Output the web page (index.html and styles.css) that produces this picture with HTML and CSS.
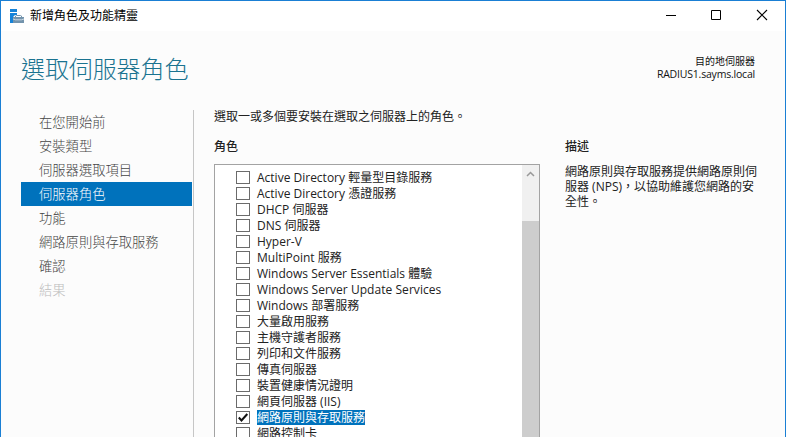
FILE: index.html
```html
<!DOCTYPE html>
<html lang="zh-Hant">
<head>
<meta charset="utf-8">
<title>新增角色及功能精靈</title>
<link rel="stylesheet" href="styles.css">
</head>
<body>
<div class="window">
  <header class="titlebar">
    <svg class="app-icon" width="15" height="15" viewBox="0 0 15 15">
      <path fill="#1683d8" d="M0 0h7v3H0zM0 4h7v2H5L3 8v6H0z"/>
      <path fill="#7494ad" d="M3 8h11v6H3z"/>
      <path fill="none" stroke="#7494ad" d="M5.500 8V7L6.500 6.500h4L11.500 7v1"/>
      <path fill="none" stroke="#dfe8ef" stroke-width=".8" d="M3 10l2.500 .8h6L14 10"/>
    </svg>
    <span class="caption">新增角色及功能精靈</span>
    <svg class="controls" width="104" height="12" viewBox="0 0 104 12">
      <path fill="none" stroke="#000" d="M0 6.500h10M45.500 1.500h9v9h-9z"/>
      <path fill="none" stroke="#000" stroke-width="1.100" d="M91 1l10 10M101 1L91 11"/>
    </svg>
  </header>
  <div class="heading">
    <h1>選取伺服器角色</h1>
    <div class="destination">
      <div>目的地伺服器</div>
      <div class="host">RADIUS1.sayms.local</div>
    </div>
  </div>
  <main class="content">
    <nav class="steps">
      <div class="step">在您開始前</div>
      <div class="step">安裝類型</div>
      <div class="step">伺服器選取項目</div>
      <div class="step current">伺服器角色</div>
      <div class="step">功能</div>
      <div class="step">網路原則與存取服務</div>
      <div class="step">確認</div>
      <div class="step disabled">結果</div>
    </nav>
    <section class="page">
      <p class="intro">選取一或多個要安裝在選取之伺服器上的角色。</p>
      <div class="columns">
        <div class="roles">
          <h2>角色</h2>
          <div class="listbox">
            <div class="items">
              <div class="item"><i class="box"></i><span class="name">Active Directory 輕量型目錄服務</span></div>
              <div class="item"><i class="box"></i><span class="name">Active Directory 憑證服務</span></div>
              <div class="item"><i class="box"></i><span class="name">DHCP 伺服器</span></div>
              <div class="item"><i class="box"></i><span class="name">DNS 伺服器</span></div>
              <div class="item"><i class="box"></i><span class="name">Hyper-V</span></div>
              <div class="item"><i class="box"></i><span class="name">MultiPoint 服務</span></div>
              <div class="item"><i class="box"></i><span class="name">Windows Server Essentials 體驗</span></div>
              <div class="item"><i class="box"></i><span class="name wide">Windows Server Update Services</span></div>
              <div class="item"><i class="box"></i><span class="name">Windows 部署服務</span></div>
              <div class="item"><i class="box"></i><span class="name">大量啟用服務</span></div>
              <div class="item"><i class="box"></i><span class="name">主機守護者服務</span></div>
              <div class="item"><i class="box"></i><span class="name">列印和文件服務</span></div>
              <div class="item"><i class="box"></i><span class="name">傳真伺服器</span></div>
              <div class="item"><i class="box"></i><span class="name">裝置健康情況證明</span></div>
              <div class="item"><i class="box"></i><span class="name">網頁伺服器 (IIS)</span></div>
              <div class="item"><i class="box"><svg class="tick" width="12" height="11" viewBox="0 0 12 11"><path fill="none" stroke="#111" stroke-width="2" d="M1.800 5.500L4.500 8.500L10.300 2"/></svg></i><span class="name selected">網路原則與存取服務</span></div>
              <div class="item"><i class="box"></i><span class="name">網路控制卡</span></div>
            </div>
            <div class="scrollbar">
              <div class="up"><svg width="9" height="6" viewBox="0 0 9 6"><path fill="none" stroke="#999" stroke-width="1.500" d="M1 5l3.500-3.500L8 5"/></svg></div>
              <div class="thumb"></div>
            </div>
          </div>
        </div>
        <aside class="description">
          <h2>描述</h2>
          <p>網路原則與存取服務提供網路原則伺<br>服器 (NPS)，以協助維護您網路的安<br>全性。</p>
        </aside>
      </div>
    </section>
  </main>
</div>
</body>
</html>
```
FILE: styles.css
```css
* { box-sizing: border-box; }
body {
  margin: 0;
  overflow: hidden;
  font: 12px/16px "Open Sans", "Noto Sans CJK TC", sans-serif;
  color: #222;
}
h1, h2, p { margin: 0; font-weight: normal; }
.window {
  display: flex;
  flex-direction: column;
  height: 437px;
  overflow: hidden;
  border: 1px solid #1a7fd4;
  border-bottom: 0;
  background: #fcfcfc;
}
.titlebar {
  display: flex;
  align-items: center;
  flex: none;
  height: 30px;
  padding: 0 15px 0 9px;
  background: #fff;
  color: #000;
}
.app-icon { flex: none; margin-right: 5px; }
.caption { flex: 1; }
.controls { flex: none; position: relative; top: -1px; }
.heading {
  display: flex;
  justify-content: space-between;
  flex: none;
  height: 79px;
  padding: 20px 30px 0 20px;
}
h1 {
  font-size: 24px;
  line-height: 36px;
  font-weight: 300;
  letter-spacing: -0.1px;
  color: #1a7390;
}
.destination {
  padding-top: 4px;
  text-align: right;
  font-size: 10px;
  line-height: 13px;
  color: #111;
}
.host { font-size: 10.500px; letter-spacing: -0.2px; }
.content { display: flex; flex: 1; min-height: 0; }
.steps {
  flex: none;
  width: 193px;
  padding-left: 20px;
  border-right: 1px solid #c6c6c6;
}
.step {
  width: 171px;
  height: 24px;
  padding-left: 18px;
  font-size: 13.300px;
  line-height: 24px;
  font-weight: 300;
  color: #444;
}
.current { background: #0072bc; color: #fff; }
.disabled { color: #bbb; }
.page { flex: 1; padding-left: 20px; }
.intro { line-height: 14px; }
.columns { display: flex; height: 313px; }
.roles { display: flex; flex-direction: column; width: 326px; }
h2 {
  height: 40px;
  padding-top: 14px;
  line-height: 18px;
  font-size: 12px;
  font-weight: 500;
}
.listbox {
  display: flex;
  flex: 1;
  min-height: 0;
  border: 1px solid #a3a3a3;
  border-bottom: 0;
  background: #fff;
  overflow: hidden;
}
.items { flex: 1; padding: 4px 0 0 21px; }
.item { display: flex; align-items: center; height: 16px; }
.box {
  flex: none;
  width: 14px;
  height: 13px;
  margin-right: 7px;
  border: 1px solid #6b6b6b;
  background: #fff;
}
.tick { display: block; }
.name { height: 15px; line-height: 15px; white-space: nowrap; }
.wide { letter-spacing: 0.05px; }
.selected { background: #0072bc; color: #fff; }
.scrollbar { display: flex; flex-direction: column; width: 17px; background: #f0f0f0; }
.up { display: flex; justify-content: center; height: 56px; padding-top: 6px; }
.thumb { flex: 1; background: #cdcdcd; }
.description { padding-left: 25px; white-space: nowrap; }
.description p { line-height: 15px; }
```
